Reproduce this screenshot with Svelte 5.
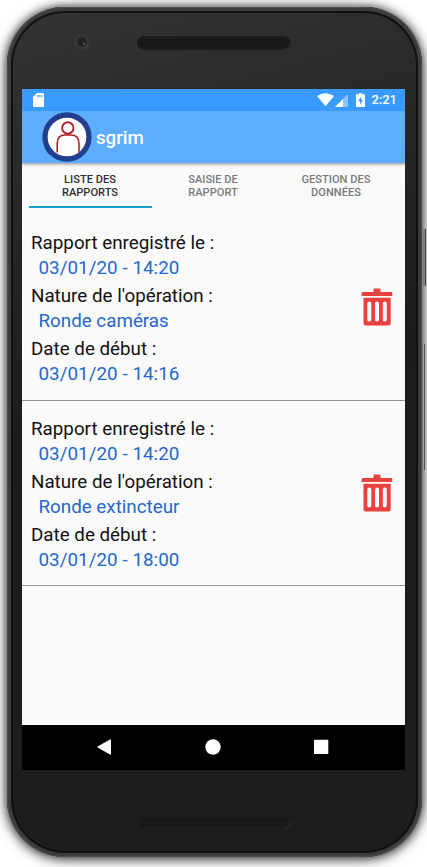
<script>
  const tabs = [
    { lines: ['LISTE DES', 'RAPPORTS'], active: true },
    { lines: ['SAISIE DE', 'RAPPORT'], active: false },
    { lines: ['GESTION DES', 'DONNÉES'], active: false }
  ];
  const reports = [
    { saved: '03/01/20 - 14:20', nature: 'Ronde caméras', start: '03/01/20 - 14:16' },
    { saved: '03/01/20 - 14:20', nature: 'Ronde extincteur', start: '03/01/20 - 18:00' }
  ];
</script>

{#snippet speaker(id)}
  <svg class="speaker" width="154" height="14" viewBox="0 0 154 14">
    <defs>
      <pattern {id} width="4" height="4" patternUnits="userSpaceOnUse">
        <circle cx="1.2" cy="1.2" r=".8" fill="#050505" />
        <circle cx="3.2" cy="3.2" r=".6" fill="#080808" />
      </pattern>
    </defs>
    <rect x=".5" y=".5" width="153" height="13" rx="6.5" fill="#1b1b1b" stroke="#1e1e1e" />
    <path d="M147 13.5A6.5 6.5 0 0 0 153.3 7" fill="none" stroke="#363636" />
    <rect x="3" y="2.5" width="147" height="9" rx="4" fill="url(#{id})" />
  </svg>
{/snippet}

<div class="stage">
  <div class="phone">
    <div class="bezel top">
      <svg class="camera" width="16" height="16" viewBox="0 0 16 16">
        <circle cx="8" cy="8" r="8" fill="#383838" />
        <circle cx="8" cy="8" r="4.8" fill="#201f25" />
        <circle cx="10" cy="9.8" r="1.2" fill="#68434b" />
      </svg>
      {@render speaker('grille-top')}
    </div>

    <div class="screen">
      <div class="status">
        <svg width="11" height="14" viewBox="0 0 11 14">
          <path fill="#fff" d="M4 0H10Q11 0 11 1V13Q11 14 10 14H1Q0 14 0 13V4Z" />
          <path stroke="#399aff" stroke-width="1.1" d="M4.7 2V4.2M6.8 2V4.2M8.9 2V4.2" />
        </svg>
        <div class="signals">
          <svg width="17" height="14" viewBox="0 0 17 14">
            <path fill="#fff" d="M0 3Q8.5-2.7 17 3L8.5 13.3Z" />
          </svg>
          <svg class="cell" width="13" height="13" viewBox="0 0 13 13">
            <path fill="#8dc5ff" d="M0 13L13 0V13Z" />
            <path fill="#fff" d="M0 13L8 5V13Z" />
          </svg>
          <svg class="battery" width="9" height="14" viewBox="0 0 9 14">
            <path fill="#fff" d="M3 0H6V1.3H9V14H0V1.3H3Z" />
            <path fill="#399aff" d="M5.2 3.5L2 8.2H4V11.8L7 6.8H5.2Z" />
          </svg>
          <span class="clock">2:21</span>
        </div>
      </div>

      <header>
        <svg width="50" height="50" viewBox="0 0 50 50">
          <circle cx="25" cy="25" r="22" fill="#fff" stroke="#213f8c" stroke-width="5.3" />
          <path fill="#213f8c" d="M40 7L44.5 9.5L47 15L42 15ZM2.5 36L9 37L11 43.5L6.5 42Z" />
          <circle cx="25.8" cy="16" r="5.7" fill="none" stroke="#b02329" stroke-width="1.9" />
          <path d="M15.2 40.5V31.5Q15.2 23 23 23H29Q37 23 37 31.5V40.5" fill="none" stroke="#b02329" stroke-width="1.6" />
        </svg>
        <h1>sgrim</h1>
      </header>

      <nav class="tabs">
        {#each tabs as tab}
          <div class="tab" class:active={tab.active}>
            {#each tab.lines as line}<span>{line}</span>{/each}
          </div>
        {/each}
      </nav>

      <main>
        {#each reports as report}
          <article>
            <dl>
              <dt>Rapport enregistré le :</dt>
              <dd class="date">{report.saved}</dd>
              <dt>Nature de l'opération :</dt>
              <dd>{report.nature}</dd>
              <dt>Date de début :</dt>
              <dd class="date">{report.start}</dd>
            </dl>
            <svg width="32" height="38" viewBox="0 0 32 38">
              <path
                fill="#e8413e"
                fill-rule="evenodd"
                d="M12.5 4V1.5Q12.5.5 13.5.5H18.5Q19.5.5 19.5 1.5V4H30Q31.3 4 31.3 5.3V8H.7V5.3Q.7 4 2 4ZM2.5 9.8H29.7V35.5Q29.7 37.5 27.7 37.5H4.5Q2.5 37.5 2.5 35.5ZM6.3 15.5V31.5A2 2 0 0 0 10.3 31.5V15.5A2 2 0 0 0 6.3 15.5ZM14 15.5V31.5A2 2 0 0 0 18 31.5V15.5A2 2 0 0 0 14 15.5ZM21.8 15.5V31.5A2 2 0 0 0 25.8 31.5V15.5A2 2 0 0 0 21.8 15.5Z"
              />
            </svg>
          </article>
        {/each}
      </main>

      <footer>
        <svg width="16" height="16" viewBox="0 0 16 16"><path fill="#fff" d="M1 7.2L13 .5Q14 0 14 1V15Q14 16 13 15.5L1 8.8Q0 8 1 7.2Z" /></svg>
        <svg width="16" height="16" viewBox="0 0 16 16"><circle cx="8" cy="8" r="7.7" fill="#fff" /></svg>
        <svg width="16" height="16" viewBox="0 0 16 16"><rect x="0" y=".7" width="14.3" height="14.3" rx=".8" fill="#fff" /></svg>
      </footer>
    </div>

    <div class="bezel bottom">{@render speaker('grille-bottom')}</div>
  </div>
  <i class="button power"></i>
  <i class="button volume"></i>
</div>

<style>
  .stage {
    position: relative;
    box-sizing: border-box;
    width: 427px;
    height: 867px;
    padding: 7px 5px 10px 7px;
    overflow: hidden;
    background: #fff;
    font-family: Roboto, sans-serif;
  }
  .button {
    position: absolute;
    right: 1px;
    width: 3px;
    background: linear-gradient(90deg, #777, #858585 60%, #444 70%);
  }
  .power { top: 229px; height: 57px; }
  .volume { top: 344px; height: 126px; right: 2px; background: linear-gradient(90deg, #666, #aaa 60%, #555 70%); }
  .phone {
    position: relative;
    box-sizing: border-box;
    display: flex;
    flex-direction: column;
    width: 415px;
    height: 850px;
    padding: 0 17px 0 15px;
    border-radius: 58px;
    background: linear-gradient(165deg, #343434, #272727 22%, #1c1c1c 45%, #1d1d1e);
    box-shadow:
      inset 0 0 0 1px #505050,
      inset 0 0 0 4px #3c3c3c,
      inset 0 0 0 6px #101010,
      0 0 10px rgba(0, 0, 0, .6),
      0 2px 14px rgba(0, 0, 0, .6);
  }
  .bezel { display: flex; align-items: flex-start; }
  .top { height: 82px; flex: none; }
  .camera { margin: 27px 0 0 52px; }
  .top .speaker { margin: 29px 0 0 47px; }
  .bottom .speaker { margin: 45px 0 0 115px; }
  .screen {
    display: flex;
    flex-direction: column;
    flex: none;
    width: 383px;
    height: 681px;
    background: #fafafa;
  }
  .status {
    display: flex;
    align-items: center;
    justify-content: space-between;
    box-sizing: border-box;
    flex: none;
    height: 22px;
    padding: 0 8px 0 11px;
    background: #399aff;
  }
  .signals { display: flex; align-items: center; }
  .cell { margin-left: 1px; }
  .battery { margin-left: 8px; }
  .clock { margin-left: 6px; color: #fff; font-size: 13px; font-weight: 500; line-height: 22px; }
  header {
    position: relative;
    display: flex;
    align-items: center;
    flex: none;
    height: 52px;
    padding-left: 20px;
    background: #5eaeff;
    box-shadow: 0 1px 3px rgba(0, 0, 0, .45);
    clip-path: inset(0 0 -5px 0);
  }
  h1 { margin: 2px 0 0 4px; color: #fff; font-size: 18.7px; font-weight: 500; line-height: 24px; }
  header svg { margin-top: -1px; }
  .tabs { display: flex; flex: none; height: 45px; padding: 0 7px; }
  .tab {
    display: flex;
    flex-direction: column;
    align-items: center;
    box-sizing: border-box;
    width: 123px;
    padding-top: 9.5px;
    color: #7a7a7a;
    font-size: 11.1px;
    font-weight: 500;
    line-height: 13.3px;
  }
  .tab span { margin-left: -1px; }
  .active { border-bottom: 2px solid #16a0cc; color: #303030; }
  main { flex: 1; padding-top: 7px; }
  article {
    display: flex;
    align-items: flex-start;
    justify-content: space-between;
    box-sizing: border-box;
    height: 185px;
    padding: 0 12px 0 9px;
    border-bottom: 1px solid #929292;
  }
  article:first-child { height: 186px; }
  article svg { margin-top: 73px; }
  dl { margin: 15.6px 0 0; font-size: 18.8px; }
  dt { height: 25px; color: #111; line-height: 25px; }
  dd { height: 28.2px; margin: 0 0 0 7.5px; color: #2468ce; line-height: 25px; }
  .date { letter-spacing: .05px; }
  footer {
    display: flex;
    align-items: center;
    justify-content: space-around;
    box-sizing: border-box;
    flex: none;
    height: 45px;
    padding: 0 29px 1px;
    background: #000;
  }
</style>
